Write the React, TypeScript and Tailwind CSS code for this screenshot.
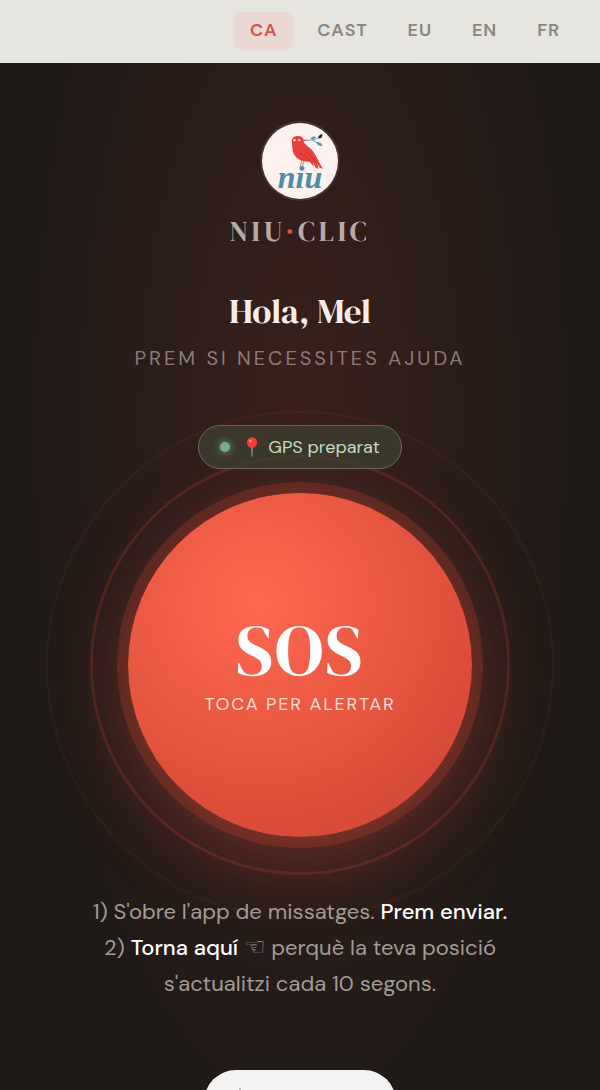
import type { ReactNode } from "react";

const LANGUAGES = ["CA", "CAST", "EU", "EN", "FR"];

function NiuLogo() {
  return (
    <svg viewBox="0 0 76 76" className="block size-full" role="img" aria-label="niu">
      <circle cx="38" cy="38" r="38" fill="#fcf1ef" />
      <path d="M40 36 L38.2 44 M42 37 L40.4 43.5" stroke="#d98a80" strokeWidth="1.1" fill="none" />
      <path
        d="M29.8 19 C29.4 15 32 13 36 13 C39.4 13 41 14.6 41.4 16.4 L45 17.2 L41.4 18.2 C42.5 21.5 46 23 49 26 C53 30 55 35 57 39 L61 46 L57.4 44.4 L55.5 40.5 L56.5 46 L53.5 44.5 L51.5 40 L50.5 42.5 L48 38.8 C41.5 39 34.5 36.5 31.8 31 C30 27.5 30.6 23 29.8 19 Z"
        fill="#e8413c"
      />
      <path d="M41 26 C46 29 50 34 54 40 M38 30 C43 33 48 37 52 43" stroke="#b8373a" strokeWidth="0.9" fill="none" />
      <path d="M31.4 17.2 h2.4 M36 17.2 h2.4" stroke="#fcf1ef" strokeWidth="1.5" />
      <path d="M43 17 C49 17.8 53 17 58.5 13.5 M51 17.2 L57 21" stroke="#5b9aa8" strokeWidth="0.9" fill="none" />
      <path d="M48.5 16 C50 12.6 53 13.2 54 14 C53 16.4 51 16.6 48.5 16Z M54 19 C58 18.4 60 20.6 60.6 23 C57.4 23.4 55 22 54 19Z" fill="#5b9aa8" />
      <path d="M56.5 15.6 C56 12.8 58 11 60.4 11.2 C60.8 13.6 59.4 15.6 56.5 15.6Z" fill="#1c2a30" />
      <text x="38" y="65" textAnchor="middle" fill="#4d8ca1" fontFamily="Liberation Serif, serif" fontStyle="italic" fontWeight="700" fontSize="32">
        niu
      </text>
    </svg>
  );
}

function PinIcon() {
  return (
    <svg viewBox="0 0 12 20" className="h-5 w-3" aria-hidden="true">
      <path d="M5.2 9 h1.6 L6.4 19.5 h-.8 Z" fill="#8fa3b0" />
      <circle cx="6" cy="5.5" r="5.2" fill="#ee3f36" />
      <circle cx="4.4" cy="4" r="1.4" fill="#ff8b7d" />
    </svg>
  );
}

function Strong({ children }: { children: ReactNode }) {
  return <strong className="font-medium text-white">{children}</strong>;
}

export default function App() {
  return (
    <div className="flex h-screen flex-col overflow-hidden bg-[#1e1a17] font-['DM_Sans',Inter,sans-serif] text-white">
      <nav aria-label="Idioma" className="flex shrink-0 justify-end gap-2 bg-[#e7e5df] px-6 pt-3 pb-[13px]">
        {LANGUAGES.map((code) => (
          <button
            key={code}
            type="button"
            aria-pressed={code === "CA"}
            className={
              code === "CA"
                ? "rounded-lg bg-[#ead8d3] px-4 pt-[5px] pb-[7px] text-lg leading-6.5 font-semibold tracking-wider text-[#d4524a]"
                : "rounded-lg px-4 pt-[5px] pb-[7px] text-lg leading-6.5 font-semibold tracking-wider text-[#8a8780]"
            }
          >
            {code}
          </button>
        ))}
      </nav>

      <main className="flex flex-1 flex-col items-center bg-[radial-gradient(ellipse_50%_72%_at_50%_33%,#39201b_0%,#1e1a17_100%)] pt-[58px]">
        <div className="size-20 shrink-0 rounded-full bg-[#45322f] p-0.5">
          <NiuLogo />
        </div>
        <p className="mt-3 font-['DM_Serif_Display','Liberation_Serif',serif] text-[28px] leading-9 font-normal tracking-[4px] text-[#b8aaa7]">
          NIU<span className="text-[#dd5142]">·</span>CLIC
        </p>

        <h1 className="mt-[42px] font-['DM_Serif_Display','Liberation_Serif',serif] text-[35px] leading-10 font-normal text-[#f3eeed]">Hola, Mel</h1>
        <p className="mt-[13px] text-xl leading-7 tracking-[3px] text-[#8b7b78]">PREM SI NECESSITES AJUDA</p>

        <p className="z-10 mt-[53px] flex items-center rounded-full border border-[#63695a] bg-[#3f4233]/70 px-[21px] py-2 text-lg leading-6.5 text-[#c5dcc0]">
          <span className="mr-4 size-2.5 rounded-full bg-[#79b083] shadow-[0_0_8px_#79b083]" />
          <PinIcon />
          <span className="ml-2.5">GPS preparat</span>
        </p>

        <div className="relative mt-6 size-86 shrink-0">
          <span className="absolute -inset-[82px] rounded-full border-2 border-[#d94a35]/8" />
          <span className="absolute -inset-[38px] rounded-full border-3 border-[#d94a35]/20" />
          <button
            type="button"
            className="relative flex size-full flex-col items-center justify-center rounded-full bg-[radial-gradient(circle_at_38%_32%,#ff6850_0%,#e5553f_50%,#cb4130_100%)] pb-0.5 shadow-[0_0_0_11px_rgba(217,74,60,0.22),0_24px_80px_rgba(217,74,60,0.4)]"
          >
            <span className="mb-1 font-['DM_Serif_Display','Liberation_Serif',serif] text-[72px] leading-19 font-normal tracking-wide">SOS</span>
            <span className="text-lg leading-6 tracking-widest text-[#fbdcd3]">TOCA PER ALERTAR</span>
          </button>
        </div>

        <p className="z-10 mt-[57px] text-center text-[22px] leading-9 text-[#a39a96]">
          1) S'obre l'app de missatges. <Strong>Prem enviar.</Strong>
          <br />
          2) <Strong>Torna aquí</Strong> <span className="font-['DejaVu_Sans',sans-serif] text-2xl leading-none">☜</span> perquè la teva posició
          <br />
          s'actualitzi cada 10 segons.
        </p>

        <button type="button" aria-label="Inici" className="mt-17 flex h-16 w-48 shrink-0 rounded-full bg-[#f4f3f3] px-7.5 pt-4.5">
          <svg viewBox="0 0 12 12" className="size-3" aria-hidden="true">
            <path d="M6 0 L11 11 H1 Z" fill="#777777" />
          </svg>
        </button>
      </main>
    </div>
  );
}
